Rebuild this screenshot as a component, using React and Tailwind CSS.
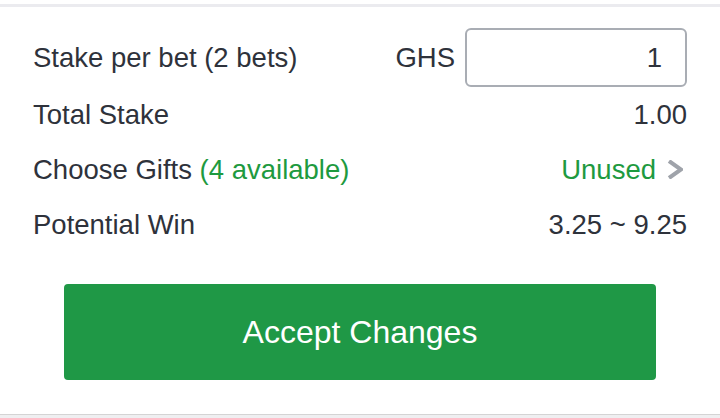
import React, { useState } from 'react';

const rows = [
  { label: 'Total Stake', value: '1.00' },
  { label: 'Choose Gifts', extra: '(4 available)', value: 'Unused', link: true },
  { label: 'Potential Win', value: '3.25 ~ 9.25' },
];

function Chevron() {
  return (
    <svg width="16" height="19" viewBox="0 0 16 19" className="ml-[11px] mr-[4px]">
      <polyline points="2,1 14,9.5 2,18" fill="none" stroke="#9fa3aa" strokeWidth="4" />
    </svg>
  );
}

export default function App() {
  const [stake, setStake] = useState('1');

  return (
    <div className="w-[720px] h-[418px] bg-white flex flex-col text-[#2e323b] font-['Liberation_Sans',Arial,sans-serif]">
      <div className="mt-[4px] h-[3px] bg-[#ebebef]" />

      <div className="flex-1 flex flex-col px-[33px] pt-[21px]">
        {/* stake input */}
        <div className="h-[59px] flex items-center justify-between text-[27.5px]">
          <span>Stake per bet (2 bets)</span>
          <div className="flex items-center gap-[10px]">
            <span>GHS</span>
            <input
              value={stake}
              onChange={(e) => setStake(e.target.value)}
              className="w-[222px] h-[59px] border-2 border-[#a9adb4] rounded-[6px] text-right pr-[23px] text-[27.5px] text-[#2e323b] outline-none"
            />
          </div>
        </div>

        {rows.map((row) => (
          <div key={row.label} className="h-[55px] flex items-center justify-between text-[27.5px]">
            <span>
              {row.label}
              {row.extra && <span className="text-[#1e9a3f]"> {row.extra}</span>}
            </span>
            {row.link ? (
              <span className="flex items-center text-[#1e9a3f]">
                {row.value}
                <Chevron />
              </span>
            ) : (
              <span>{row.value}</span>
            )}
          </div>
        ))}

        <button className="mt-[32px] mx-[31px] h-[96px] rounded-[4px] bg-[#1f9846] text-white text-[32px]">
          Accept Changes
        </button>
      </div>

      <div className="h-[4px] border-t border-[#d4d4d4] bg-[#efeff1]" />
    </div>
  );
}
